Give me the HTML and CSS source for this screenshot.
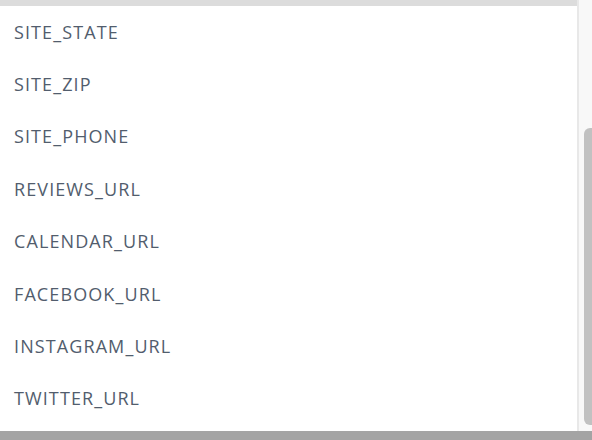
FILE: index.html
```html
<!DOCTYPE html>
<html>
<head>
<meta charset="utf-8">
<link rel="stylesheet" href="styles.css">
</head>
<body>
<div class="page">
  <div class="main">
    <ul class="list">
      <li class="item">SITE_STATE</li>
      <li class="item">SITE_ZIP</li>
      <li class="item">SITE_PHONE</li>
      <li class="item">REVIEWS_URL</li>
      <li class="item">CALENDAR_URL</li>
      <li class="item">FACEBOOK_URL</li>
      <li class="item">INSTAGRAM_URL</li>
      <li class="item">TWITTER_URL</li>
    </ul>
    <div class="scroll">
      <div class="thumb"></div>
    </div>
  </div>
  <div class="bottom"></div>
</div>
</body>
</html>
```
FILE: styles.css
```css
html, body {
  margin: 0;
  padding: 0;
  background: #ffffff;
}
.page {
  width: 592px;
  height: 440px;
  display: flex;
  flex-direction: column;
  overflow: hidden;
}
.main {
  display: flex;
  height: 431px;
  overflow: hidden;
}
.list {
  flex: 1;
  margin: 0;
  padding: 0;
  list-style: none;
  border-top: 6px solid #dcdcdc;
  background: #ffffff;
}
.item {
  height: 52.4px;
  display: flex;
  align-items: center;
  padding-left: 14px;
  padding-bottom: 1px;
  box-sizing: border-box;
  font-family: "Open Sans", sans-serif;
  font-size: 18px;
  letter-spacing: 1.1px;
  color: #525d6d;
}
.scroll {
  width: 13px;
  border-left: 2px solid #e8e8e8;
  background: #f8f8f8;
  display: flex;
  flex-direction: column;
  align-items: flex-end;
  padding-top: 128px;
}
.thumb {
  width: 8px;
  height: 297px;
  background: #c1c1c1;
  border-radius: 6px 0 0 6px;
}
.bottom {
  height: 9px;
  background: #a4a4a4;
}
```
